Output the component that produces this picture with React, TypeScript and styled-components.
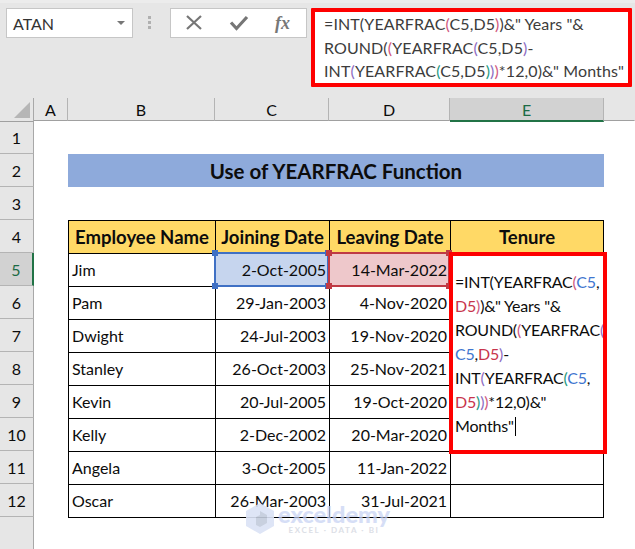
import React from 'react'
import styled, { createGlobalStyle } from 'styled-components'

type Tone = 'pink' | 'purple' | 'green' | 'blue' | 'red'
type Token = string | [string, Tone]

const toneColors: Record<Tone, string> = {
  pink: '#d0587e',
  purple: '#8e6cc2',
  green: '#1f9a82',
  blue: '#3f76cf',
  red: '#c8344c',
}

const barLines: Token[][] = [
  ['=INT(YEARFRAC', ['(', 'pink'], 'C5,D5', [')', 'pink'], ')&" Years "&'],
  ['ROUND(', ['(', 'pink'], 'YEARFRAC', ['(', 'purple'], 'C5,D5', [')', 'purple'], '-'],
  ['INT', ['(', 'purple'], 'YEARFRAC', ['(', 'green'], 'C5,D5', [')', 'green'], [')', 'purple'], [')', 'pink'], '*12,0)&" Months"'],
]

const editorLines: Token[][] = [
  ['=INT(YEARFRAC', ['(', 'pink'], ['C5', 'blue'], ','],
  [['D5', 'red'], [')', 'pink'], ')&" Years "&'],
  ['ROUND(', ['(', 'pink'], 'YEARFRAC', ['(', 'purple']],
  [['C5', 'blue'], ',', ['D5', 'red'], [')', 'purple'], '-'],
  ['INT', ['(', 'purple'], 'YEARFRAC', ['(', 'green'], ['C5', 'blue'], ','],
  [['D5', 'red'], [')', 'green'], [')', 'purple'], [')', 'pink'], '*12,0)&"'],
  ['Months"'],
]

const employees = [
  ['Jim', '2-Oct-2005', '14-Mar-2022'],
  ['Pam', '29-Jan-2003', '4-Nov-2020'],
  ['Dwight', '24-Jul-2003', '19-Nov-2020'],
  ['Stanley', '26-Oct-2003', '25-Nov-2021'],
  ['Kevin', '20-Jul-2005', '19-Oct-2020'],
  ['Kelly', '2-Dec-2002', '20-Mar-2020'],
  ['Angela', '3-Oct-2005', '11-Jan-2022'],
  ['Oscar', '26-Mar-2003', '31-Jul-2021'],
]

const renderTokens = (tokens: Token[]) =>
  tokens.map((t, i) =>
    typeof t === 'string' ? <span key={i}>{t}</span> : <Ref key={i} $tone={t[1]}>{t[0]}</Ref>
  )

const App = () => {
  return (
    <Page>
      <GlobalStyle />
      <Ribbon>
        <NameBox>
          ATAN
          <Caret />
        </NameBox>
        <Grip>
          <i />
          <i />
          <i />
        </Grip>
        <ActionBox>
          <svg width="18" height="18" viewBox="0 0 18 18">
            <path d="M2 2l14 13M16 2L2 15" stroke="#767676" strokeWidth="2.2" fill="none" />
          </svg>
          <svg width="20" height="18" viewBox="0 0 20 18">
            <path d="M2 8.5l5.5 6L18 3" stroke="#767676" strokeWidth="3.2" fill="none" />
          </svg>
          <Fx>fx</Fx>
        </ActionBox>
        <FormulaBar>
          {barLines.map((line, i) => (
            <div key={i}>{renderTokens(line)}</div>
          ))}
        </FormulaBar>
      </Ribbon>

      <ColumnBar>
        <Corner />
        {['A', 'B', 'C', 'D'].map((c) => (
          <ColumnHead key={c}>{c}</ColumnHead>
        ))}
        <ColumnHead $active>E</ColumnHead>
        <ColumnHead $plain />
      </ColumnBar>

      <SheetRow>
        <RowHead>1</RowHead>
      </SheetRow>
      <SheetRow>
        <RowHead>2</RowHead>
        <Title>Use of YEARFRAC Function</Title>
      </SheetRow>
      <SheetRow>
        <RowHead>3</RowHead>
      </SheetRow>
      <SheetRow>
        <RowHead>4</RowHead>
        <HeaderCell>Employee Name</HeaderCell>
        <HeaderCell>Joining Date</HeaderCell>
        <HeaderCell>Leaving Date</HeaderCell>
        <HeaderCell $last>Tenure</HeaderCell>
      </SheetRow>
      {employees.map(([name, joined, left], i) => (
        <SheetRow key={name}>
          <RowHead $active={i === 0}>{i + 5}</RowHead>
          <Cell>{name}</Cell>
          <DateCell>
            <CellText>{joined}</CellText>
            {i === 0 && <RefBox $tone="blue"><Handles $tone="blue" /></RefBox>}
          </DateCell>
          <DateCell>
            <CellText>{left}</CellText>
            {i === 0 && <RefBox $tone="red"><Handles $tone="red" /></RefBox>}
          </DateCell>
          <Cell $last />
        </SheetRow>
      ))}
      <SheetRow>
        <RowHead $blank />
        <TableEnd />
      </SheetRow>

      <Editor>
        {editorLines.map((line, i) => (
          <div key={i}>
            {renderTokens(line)}
            {i === editorLines.length - 1 && <Cursor />}
          </div>
        ))}
      </Editor>

      <Watermark>
        <svg width="28" height="31" viewBox="0 0 28 31">
          <path d="M14 0l14 8v15l-14 8-14-8V8z" fill="#dbe3f6" />
          <path d="M14 8l7 4v8l-7 4-4-2v-8l4-2z" fill="#c3cbdc" />
        </svg>
        <Brand>
          <BrandName>exceldemy</BrandName>
          <BrandTag>EXCEL · DATA · BI</BrandTag>
        </Brand>
      </Watermark>
    </Page>
  )
}

export default App

const GlobalStyle = createGlobalStyle`
  html, body {
    margin: 0;
    padding: 0;
    background: #ffffff;
  }
  * {
    box-sizing: border-box;
  }
`

const columns = '34px 34px 147px 114px 121px 154px 31px'

const Page = styled.div`
  position: relative;
  width: 635px;
  height: 549px;
  overflow: hidden;
  font-family: Lato, 'Liberation Sans', sans-serif;
  font-size: 16px;
  color: #0c0c0c;
  background: #ffffff;
`

const Ribbon = styled.div`
  display: flex;
  align-items: flex-start;
  height: 98px;
  padding: 5px 0 0 6px;
  background: #e6e6e6;
  border-top: 3px solid #ececec;
`

const NameBox = styled.div`
  display: flex;
  align-items: center;
  justify-content: space-between;
  width: 127px;
  height: 30px;
  padding: 0 7px 0 6px;
  background: #ffffff;
  border: 1px solid #c6c6c6;
  color: #333333;
`

const Caret = styled.span`
  width: 0;
  height: 0;
  border-left: 4px solid transparent;
  border-right: 4px solid transparent;
  border-top: 4px solid #777777;
`

const Grip = styled.div`
  display: flex;
  flex-direction: column;
  gap: 2px;
  width: 37px;
  height: 30px;
  padding: 8px 0 0 15px;
  & > i {
    width: 3px;
    height: 3px;
    background: #b0b0b0;
  }
`

const ActionBox = styled.div`
  display: flex;
  align-items: center;
  justify-content: space-between;
  width: 137px;
  height: 30px;
  padding: 0 16px 0 14px;
  background: #ffffff;
  border: 1px solid #c6c6c6;
`

const Fx = styled.span`
  font-family: 'Liberation Serif', serif;
  font-style: italic;
  font-weight: 700;
  font-size: 18px;
  color: #777777;
`

const FormulaBar = styled.div`
  width: 321px;
  height: 79px;
  margin-left: 4px;
  padding: 0 0 0 9px;
  background: #ffffff;
  border: 4px solid #fe0000;
  border-radius: 1px;
  color: #3c3c3c;
  line-height: 23.5px;
  letter-spacing: 0.1px;
  white-space: nowrap;
`

const Ref = styled.span<{ $tone: Tone }>`
  color: ${({ $tone }) => toneColors[$tone]};
`

const ColumnBar = styled.div`
  display: grid;
  grid-template-columns: ${columns};
  height: 23px;
  background: #e6e6e6;
`

const Corner = styled.div`
  position: relative;
  border-right: 1px solid #a8a8a8;
  border-bottom: 1px solid #a0a0a0;
  &::after {
    content: '';
    position: absolute;
    right: 3px;
    bottom: 3px;
    border-left: 16px solid transparent;
    border-bottom: 16px solid #b6b6b6;
  }
`

const ColumnHead = styled.div<{ $active?: boolean; $plain?: boolean }>`
  display: flex;
  align-items: center;
  justify-content: center;
  height: ${({ $active }) => ($active ? '24px' : '23px')};
  background: ${({ $active }) => ($active ? '#d2d2d2' : '#e6e6e6')};
  color: ${({ $active }) => ($active ? '#1c6b45' : '#0c0c0c')};
  border-right: 1px solid ${({ $plain }) => ($plain ? 'transparent' : '#b4b4b4')};
  border-bottom: ${({ $active }) => ($active ? '2px solid #217346' : '1px solid #a0a0a0')};
`

const SheetRow = styled.div`
  display: grid;
  grid-template-columns: ${columns};
  height: 33px;
`

const RowHead = styled.div<{ $active?: boolean; $blank?: boolean }>`
  grid-column: 1;
  display: flex;
  align-items: center;
  justify-content: center;
  background: ${({ $active }) => ($active ? '#d2d2d2' : '#e6e6e6')};
  color: ${({ $active }) => ($active ? '#1c6b45' : '#0c0c0c')};
  border-right: ${({ $active }) => ($active ? '2px solid #217346' : '1px solid #a8a8a8')};
  border-bottom: ${({ $blank }) => ($blank ? 'none' : '1px solid #b4b4b4')};
`

const Title = styled.div`
  grid-column: 3 / 7;
  display: flex;
  align-items: center;
  justify-content: center;
  background: #8eaadb;
  font-size: 20.5px;
  font-weight: 700;
  color: #0c0c0c;
`

const Cell = styled.div<{ $last?: boolean }>`
  position: relative;
  display: flex;
  align-items: center;
  padding: 0 3px 2px;
  border-top: 1px solid #000000;
  border-left: 1px solid #000000;
  border-right: ${({ $last }) => ($last ? '1px solid #000000' : 'none')};
  &:nth-child(2) {
    grid-column: 3;
  }
`

const DateCell = styled(Cell)`
  justify-content: flex-end;
`

const CellText = styled.span`
  position: relative;
  z-index: 2;
`

const HeaderCell = styled(Cell)`
  justify-content: center;
  padding-bottom: 1px;
  background: #ffd966;
  font-size: 18.5px;
  font-weight: 700;
  white-space: nowrap;
`

const TableEnd = styled.div`
  grid-column: 3 / 7;
  height: 1px;
  background: #000000;
`

const RefBox = styled.div<{ $tone: 'blue' | 'red' }>`
  position: absolute;
  inset: -2px 0 -1px -2px;
  z-index: 1;
  background: ${({ $tone }) => ($tone === 'blue' ? '#c6d5ee' : '#eec8cb')};
  border: 2px solid ${({ $tone }) => ($tone === 'blue' ? '#3f70c4' : '#bf3a44')};
`

const Handles = styled.div<{ $tone: 'blue' | 'red' }>`
  position: absolute;
  inset: -4px;
  --c: ${({ $tone }) => ($tone === 'blue' ? '#3f70c4' : '#bf3a44')};
  background:
    linear-gradient(var(--c), var(--c)) left top / 6px 6px no-repeat,
    linear-gradient(var(--c), var(--c)) right top / 6px 6px no-repeat,
    linear-gradient(var(--c), var(--c)) left bottom / 6px 6px no-repeat,
    linear-gradient(var(--c), var(--c)) right bottom / 6px 6px no-repeat;
`

const Editor = styled.div`
  position: absolute;
  z-index: 3;
  left: 449px;
  top: 252px;
  width: 158px;
  height: 202px;
  padding: 14px 0 0 2px;
  background: #ffffff;
  border: 4px solid #fe0000;
  color: #0c0c0c;
  line-height: 24px;
  letter-spacing: -0.2px;
  white-space: nowrap;
  overflow: hidden;
`

const Cursor = styled.span`
  display: inline-block;
  width: 1px;
  height: 19px;
  margin-left: 1px;
  vertical-align: -4px;
  background: #000000;
`

const Watermark = styled.div`
  position: absolute;
  z-index: 4;
  left: 246px;
  top: 503px;
  display: flex;
  gap: 4px;
  opacity: 0.9;
  pointer-events: none;
`

const Brand = styled.div`
  display: flex;
  flex-direction: column;
  align-items: center;
`

const BrandName = styled.div`
  font-size: 23.5px;
  line-height: 23px;
  font-weight: 900;
  color: #c7d3f5;
  opacity: 0.8;
`

const BrandTag = styled.div`
  font-size: 8px;
  line-height: 9px;
  font-weight: 700;
  letter-spacing: 1.6px;
  color: #d9dce4;
`
